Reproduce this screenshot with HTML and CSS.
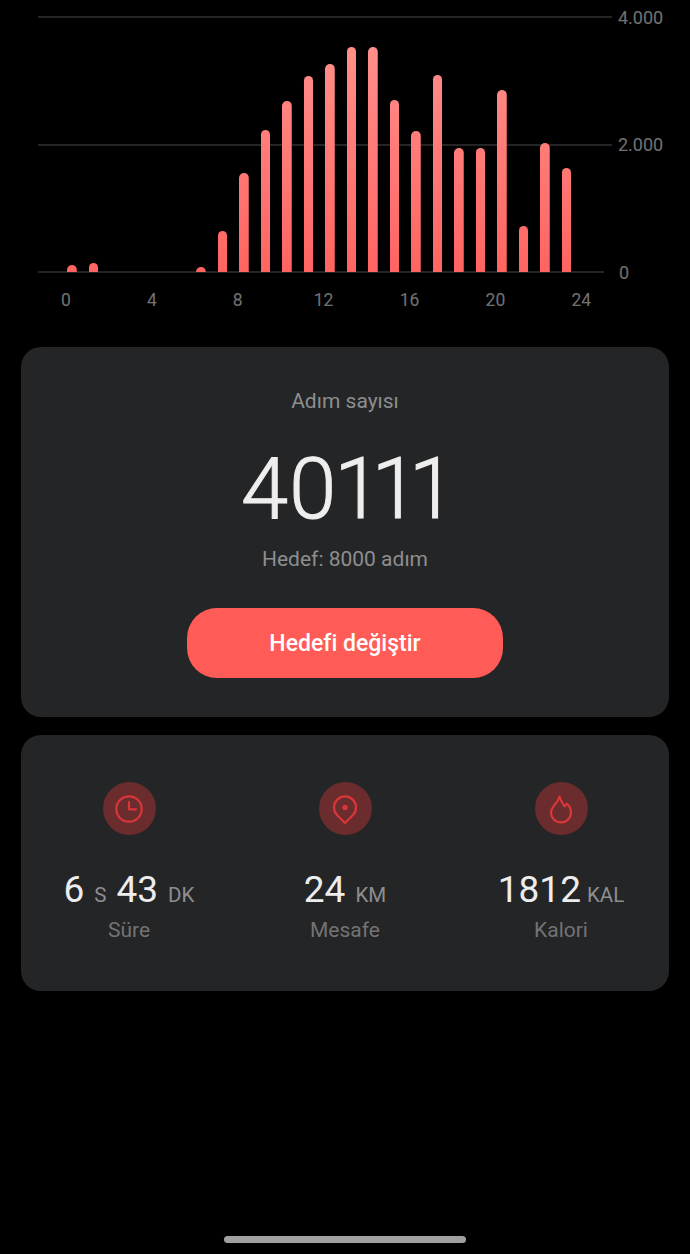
FILE: index.html
```html
<!DOCTYPE html>
<html lang="tr">
<head>
    <meta charset="UTF-8">
    <meta name="viewport" content="width=device-width, initial-scale=1.0">
    <title>Adım sayısı</title>
    <link rel="stylesheet" href="styles.css">
</head>
<body>
    <div class="chart">
        <div class="grid">
            <div class="grid-row"><div class="grid-line"></div><div class="grid-label">4.000</div></div>
            <div class="grid-row"><div class="grid-line"></div><div class="grid-label">2.000</div></div>
            <div class="grid-row"><div class="grid-line grid-line-base"></div><div class="grid-label grid-label-base">0</div></div>
        </div>
        <div class="bars">
            <div class="slot"><div class="bar" style="height: 7px"></div></div>
            <div class="slot"><div class="bar" style="height: 9px"></div></div>
            <div class="slot"></div>
            <div class="slot"></div>
            <div class="slot"></div>
            <div class="slot"></div>
            <div class="slot"><div class="bar" style="height: 5px"></div></div>
            <div class="slot"><div class="bar" style="height: 41px"></div></div>
            <div class="slot"><div class="bar" style="height: 99px"></div></div>
            <div class="slot"><div class="bar" style="height: 142px"></div></div>
            <div class="slot"><div class="bar" style="height: 171px"></div></div>
            <div class="slot"><div class="bar" style="height: 196px"></div></div>
            <div class="slot"><div class="bar" style="height: 208px"></div></div>
            <div class="slot"><div class="bar" style="height: 225px"></div></div>
            <div class="slot"><div class="bar" style="height: 225px"></div></div>
            <div class="slot"><div class="bar" style="height: 172px"></div></div>
            <div class="slot"><div class="bar" style="height: 141px"></div></div>
            <div class="slot"><div class="bar" style="height: 197px"></div></div>
            <div class="slot"><div class="bar" style="height: 124px"></div></div>
            <div class="slot"><div class="bar" style="height: 124px"></div></div>
            <div class="slot"><div class="bar" style="height: 182px"></div></div>
            <div class="slot"><div class="bar" style="height: 46px"></div></div>
            <div class="slot"><div class="bar" style="height: 129px"></div></div>
            <div class="slot"><div class="bar" style="height: 104px"></div></div>
        </div>
    </div>
    <div class="x-axis">
        <span>0</span><span>4</span><span>8</span><span>12</span><span>16</span><span>20</span><span>24</span>
    </div>

    <div class="cards">
        <div class="card card-steps">
            <div class="steps-title">Adım sayısı</div>
            <div class="steps-count">40111</div>
            <div class="steps-goal">Hedef: 8000 adım</div>
            <button class="btn-goal">Hedefi değiştir</button>
        </div>

        <div class="card card-stats">
            <div class="stat">
                <div class="stat-icon">
                    <svg viewBox="0 0 32 32" width="32" height="32"><circle cx="16" cy="16" r="12.7"/><path d="M16 9v7.3h7"/></svg>
                </div>
                <div class="stat-value"><b>6</b><span>S</span><b>43</b><span>DK</span></div>
                <div class="stat-label">Süre</div>
            </div>
            <div class="stat">
                <div class="stat-icon">
                    <svg viewBox="0 0 32 32" width="32" height="32"><path d="M16 30l-8-8a11 11 0 1 1 16 0z"/><circle class="dot" cx="16" cy="14.5" r="2.7"/></svg>
                </div>
                <div class="stat-value"><b>24</b><span>KM</span></div>
                <div class="stat-label">Mesafe</div>
            </div>
            <div class="stat">
                <div class="stat-icon">
                    <svg viewBox="0 0 32 32" width="32" height="32"><path d="M14.5 3.5C15.5 7.5 17.5 10.5 19.3 13.2C20.5 12.8 21.3 12 21.9 10.8C24.8 13 26 16.5 26 19.5A10 9.8 0 0 1 6 19.5C6 13.5 13 10 14.5 3.5z"/></svg>
                </div>
                <div class="stat-value stat-value-tight"><b>1812</b><span>KAL</span></div>
                <div class="stat-label">Kalori</div>
            </div>
        </div>
    </div>

    <div class="home-bar"></div>
</body>
</html>
```

FILE: styles.css
```css
* {
    margin: 0;
    padding: 0;
    box-sizing: border-box;
}

body {
    font-family: Roboto, "Liberation Sans", sans-serif;
    background: #000;
    width: 690px;
    height: 1254px;
    display: flex;
    flex-direction: column;
    overflow: hidden;
}

.chart {
    position: relative;
    height: 257px;
    margin: 16px 0 0 38px;
}

.grid {
    position: absolute;
    top: 0;
    left: 0;
    right: 0;
    bottom: 0;
    display: flex;
    flex-direction: column;
    justify-content: space-between;
}

.grid-row {
    display: flex;
    align-items: center;
    height: 2px;
}

.grid-line {
    width: 574px;
    height: 2px;
    background: #242425;
}

.grid-line-base {
    width: 566px;
}

.grid-label {
    margin-left: 6px;
    font-size: 18px;
    color: white;
    opacity: 0.44;
}

.grid-label-base {
    margin-left: 15px;
}

.bars {
    position: relative;
    display: flex;
    align-items: flex-end;
    height: 256px;
    padding-left: 23px;
}

.slot {
    width: 21.5px;
    display: flex;
    justify-content: center;
}

.bar {
    width: 9.5px;
    border-radius: 5px 5px 0 0;
    background: linear-gradient(#ff8f8a, #ff6461) bottom / 100% 225px no-repeat;
}

.x-axis {
    display: grid;
    grid-template-columns: repeat(7, 85.9px);
    margin: 17px 0 0 23px;
    font-size: 17.5px;
    line-height: 20px;
    color: white;
    opacity: 0.44;
    text-align: center;
}

.cards {
    display: flex;
    flex-direction: column;
    gap: 18px;
    margin-top: 37px;
    padding: 0 21px;
}

.card {
    background: #242527;
    border-radius: 20px;
}

.card-steps {
    display: flex;
    flex-direction: column;
    align-items: center;
    padding: 42px 0 39px;
}

.steps-title {
    font-size: 21px;
    line-height: 24px;
    color: #8e8e8f;
}

.steps-count {
    margin-top: 31px;
    font-size: 85px;
    font-weight: 300;
    line-height: 90px;
    color: #eeeeee;
    font-variant-numeric: proportional-nums;
    -webkit-text-stroke: 1px #eeeeee;
}

.steps-goal {
    margin-top: 13px;
    font-size: 21px;
    line-height: 24px;
    color: #8e8e8f;
}

.btn-goal {
    width: 316px;
    height: 70px;
    margin-top: 37px;
    border: none;
    border-radius: 30px;
    background: #ff5b57;
    color: white;
    font-family: inherit;
    font-size: 23px;
    font-weight: 500;
}

.card-stats {
    display: grid;
    grid-template-columns: repeat(3, 1fr);
    padding: 47px 0 49px;
}

.stat {
    display: flex;
    flex-direction: column;
    align-items: center;
}

.stat-icon {
    width: 53px;
    height: 53px;
    border-radius: 50%;
    background: #6a2c2d;
    display: flex;
    align-items: center;
    justify-content: center;
}

.stat-icon svg {
    fill: none;
    stroke: #d9363a;
    stroke-width: 2.2;
    stroke-linecap: round;
    stroke-linejoin: round;
}

.stat-icon .dot {
    fill: #d9363a;
    stroke: none;
}

.stat-value {
    display: flex;
    align-items: baseline;
    justify-content: center;
    gap: 10px;
    height: 44px;
    margin-top: 33px;
    line-height: 44px;
    white-space: nowrap;
}

.stat-value-tight {
    gap: 6px;
}

.stat-value b {
    font-size: 37px;
    font-weight: 400;
    color: #ededed;
}

.stat-value span {
    font-size: 20.5px;
    color: #8e8e8f;
}

.stat-label {
    margin-top: 6px;
    font-size: 21px;
    line-height: 24px;
    color: #737374;
}

.home-bar {
    width: 242px;
    height: 7px;
    margin: auto auto 11px;
    border-radius: 4px;
    background: #a0a0a0;
}
```
